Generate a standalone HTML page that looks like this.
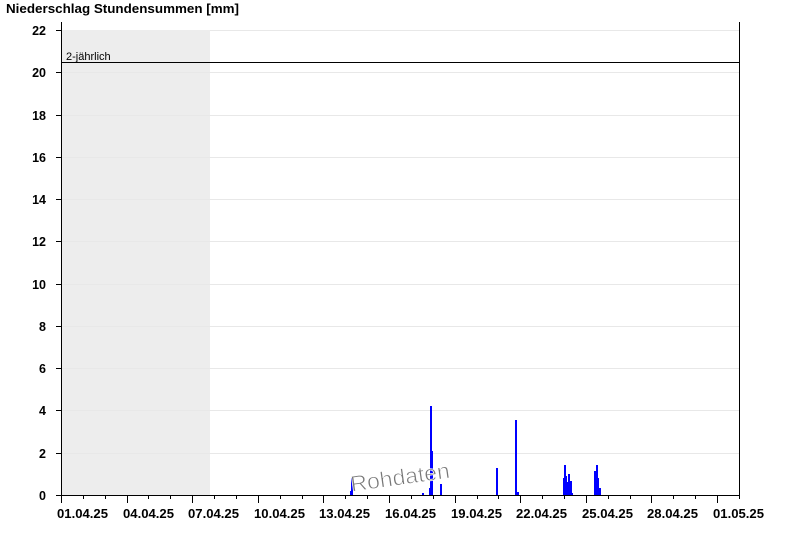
<!DOCTYPE html>
<html><head><meta charset="utf-8"><style>
body{margin:0;background:#fff;width:800px;height:550px;overflow:hidden}
text{font-family:"Liberation Sans",Arial,sans-serif}
</style></head><body>
<svg width="800" height="550" xmlns="http://www.w3.org/2000/svg">
<text x="6" y="13" font-size="13" font-weight="bold" textLength="233" lengthAdjust="spacingAndGlyphs">Niederschlag Stundensummen [mm]</text>
<rect x="61" y="30" width="149" height="465" fill="#ededed"/>
<g stroke="#e8e8e8" stroke-width="1">
<line x1="210" y1="30.5" x2="740" y2="30.5"/>
<line x1="61" y1="72.5" x2="740" y2="72.5"/>
<line x1="61" y1="115.5" x2="740" y2="115.5"/>
<line x1="61" y1="157.5" x2="740" y2="157.5"/>
<line x1="61" y1="199.5" x2="740" y2="199.5"/>
<line x1="61" y1="241.5" x2="740" y2="241.5"/>
<line x1="61" y1="284.5" x2="740" y2="284.5"/>
<line x1="61" y1="326.5" x2="740" y2="326.5"/>
<line x1="61" y1="368.5" x2="740" y2="368.5"/>
<line x1="61" y1="410.5" x2="740" y2="410.5"/>
<line x1="61" y1="453.5" x2="740" y2="453.5"/>
</g>
<line x1="61" y1="62.5" x2="740" y2="62.5" stroke="#000"/>
<text x="66" y="60" font-size="11">2-jährlich</text>
<g fill="#00f">
<rect x="351" y="478" width="2" height="17"/>
<rect x="350" y="491" width="1" height="4"/>
<rect x="422" y="493" width="2" height="2"/>
<rect x="429" y="488" width="1" height="7"/>
<rect x="430" y="406" width="2" height="89"/>
<rect x="431" y="451" width="2" height="44"/>
<rect x="440" y="484" width="2" height="11"/>
<rect x="496" y="468" width="2" height="27"/>
<rect x="515" y="420" width="2" height="75"/>
<rect x="517" y="492" width="2" height="3"/>
<rect x="563" y="478" width="1" height="17"/>
<rect x="564" y="465" width="2" height="30"/>
<rect x="566" y="476" width="1" height="19"/>
<rect x="567" y="482" width="1" height="13"/>
<rect x="568" y="474" width="2" height="21"/>
<rect x="570" y="481" width="2" height="14"/>
<rect x="572" y="493" width="1" height="2"/>
<rect x="594" y="471" width="2" height="24"/>
<rect x="596" y="465" width="2" height="30"/>
<rect x="598" y="478" width="1" height="17"/>
<rect x="599" y="488" width="2" height="7"/>
</g>
<text x="349" y="485" font-size="22" fill="#777" stroke="#fff" stroke-width="0.7" textLength="100" lengthAdjust="spacingAndGlyphs" transform="rotate(-8 398 470)">Rohdaten</text>
<line x1="61.5" y1="22" x2="61.5" y2="502" stroke="#000"/>
<line x1="739.5" y1="22" x2="739.5" y2="495" stroke="#000"/>
<line x1="56" y1="495.5" x2="740" y2="495.5" stroke="#000"/>
<g stroke="#000">
<line x1="56" y1="30.5" x2="61" y2="30.5"/><line x1="56" y1="72.5" x2="61" y2="72.5"/>
<line x1="56" y1="115.5" x2="61" y2="115.5"/><line x1="56" y1="157.5" x2="61" y2="157.5"/>
<line x1="56" y1="199.5" x2="61" y2="199.5"/><line x1="56" y1="241.5" x2="61" y2="241.5"/>
<line x1="56" y1="284.5" x2="61" y2="284.5"/><line x1="56" y1="326.5" x2="61" y2="326.5"/>
<line x1="56" y1="368.5" x2="61" y2="368.5"/><line x1="56" y1="410.5" x2="61" y2="410.5"/>
<line x1="56" y1="453.5" x2="61" y2="453.5"/>
</g>
<g font-size="12.5" font-weight="bold" text-anchor="end">
<text x="46" y="35">22</text><text x="46" y="77">20</text><text x="46" y="120">18</text>
<text x="46" y="162">16</text><text x="46" y="204">14</text><text x="46" y="246">12</text>
<text x="46" y="289">10</text><text x="46" y="331">8</text><text x="46" y="373">6</text>
<text x="46" y="415">4</text><text x="46" y="458">2</text><text x="46" y="500">0</text>
</g>
<g stroke="#000" id="ticks"></g>
<g font-size="12.5" font-weight="bold" id="lbl"></g>
</svg>
<script>
var t=document.getElementById('ticks'),l=document.getElementById('lbl'),ns='http://www.w3.org/2000/svg';
var labs=['01.04.25','04.04.25','07.04.25','10.04.25','13.04.25','16.04.25','19.04.25','22.04.25','25.04.25','28.04.25','01.05.25'];
for(var k=0;k<=31;k++){var x=Math.round(61+k*21.87)+0.5;var e=document.createElementNS(ns,'line');
e.setAttribute('x1',x);e.setAttribute('x2',x);e.setAttribute('y1',495);e.setAttribute('y2',k%3==0?503:499);t.appendChild(e);
if(k%3==0&&k/3<labs.length){var s=document.createElementNS(ns,'text');s.setAttribute('x',x-4.5);s.setAttribute('y',518);s.setAttribute('textLength',51);s.setAttribute('lengthAdjust','spacingAndGlyphs');s.textContent=labs[k/3];l.appendChild(s);}}
</script>
</body></html>
